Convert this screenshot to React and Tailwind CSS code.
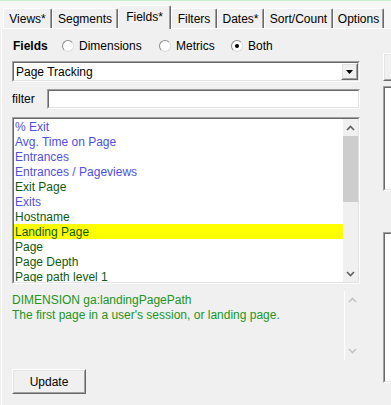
import React from 'react';

const font = { fontFamily: '"Liberation Sans", Arial, sans-serif' };

const tabs = [
  { label: 'Views*', w: 'w-[49px]' },
  { label: 'Segments', w: 'w-[66px]' },
  { label: 'Fields*', w: 'w-[53px]', active: true },
  { label: 'Filters', w: 'w-[46px]' },
  { label: 'Dates*', w: 'w-[47px]' },
  { label: 'Sort/Count', w: 'w-[69px]' },
  { label: 'Options', w: 'w-[51px]' },
];

const fields = [
  { name: '% Exit', kind: 'metric' },
  { name: 'Avg. Time on Page', kind: 'metric' },
  { name: 'Entrances', kind: 'metric' },
  { name: 'Entrances / Pageviews', kind: 'metric' },
  { name: 'Exit Page', kind: 'dim' },
  { name: 'Exits', kind: 'metric' },
  { name: 'Hostname', kind: 'dim' },
  { name: 'Landing Page', kind: 'dim', selected: true },
  { name: 'Page', kind: 'dim' },
  { name: 'Page Depth', kind: 'dim' },
  { name: 'Page path level 1', kind: 'dim' },
];

// classic sunken 3d border
function Sunken({ className = '', inner = '', children }) {
  return (
    <div className={`border border-t-[#a0a0a0] border-l-[#a0a0a0] border-r-white border-b-white ${className}`}>
      <div className={`h-full border border-t-[#696969] border-l-[#696969] border-r-[#e3e3e3] border-b-[#e3e3e3] ${inner}`}>
        {children}
      </div>
    </div>
  );
}

function Raised({ className = '', inner = '', children }) {
  return (
    <div className={`border border-t-white border-l-white border-r-[#696969] border-b-[#696969] ${className}`}>
      <div className={`h-full border border-t-[#e3e3e3] border-l-[#e3e3e3] border-r-[#a0a0a0] border-b-[#a0a0a0] ${inner}`}>
        {children}
      </div>
    </div>
  );
}

function Radio({ checked, label, w }) {
  return (
    <div className={`flex items-center ${w}`}>
      <div className="w-[12px] h-[12px] rounded-full bg-white border border-t-[#8a8a8a] border-l-[#8a8a8a] border-r-[#dcdcdc] border-b-[#dcdcdc] flex items-center justify-center">
        {checked && <div className="w-[4px] h-[4px] rounded-full bg-black" />}
      </div>
      <span className="ml-[5px]">{label}</span>
    </div>
  );
}

function Chevron({ up, color = '#606060' }) {
  return (
    <svg width="9" height="6" viewBox="0 0 9 6">
      <path d={up ? 'M1 5 L4.5 1.5 L8 5' : 'M1 1 L4.5 4.5 L8 1'} fill="none" stroke={color} strokeWidth="1.6" />
    </svg>
  );
}

export default function App() {
  return (
    <div className="w-[391px] h-[405px] overflow-hidden bg-[#f0f0f0] text-[12px] text-black leading-none" style={font}>
      <div className="h-px bg-[#c6f2c6]" />

      {/* tab strip */}
      <div className="flex items-end h-[27px] pl-[3px] bg-[#f6f6f6]">
        {tabs.map((t) => (
          <div
            key={t.label}
            className={`${t.w} flex items-center justify-center border-l border-t border-white border-r border-r-[#696969] shadow-[inset_-1px_0_0_#a0a0a0] rounded-t-[2px] ${t.active ? 'h-[24px] -mb-px relative z-10 bg-[#f0f0f0] pb-[2px]' : 'h-[20px] bg-[#f0f0f0]'}`}
          >
            {t.label}
          </div>
        ))}
      </div>

      {/* panel */}
      <div className="ml-px border-l border-t border-white h-[378px] flex">
        <div className="pl-[10px] w-[358px] flex flex-col">
          {/* fields radios */}
          <div className="mt-[9px] h-[15px] flex items-center">
            <span className="font-bold w-[50px] pl-px">Fields</span>
            <Radio label="Dimensions" w="w-[97px]" />
            <Radio label="Metrics" w="w-[72px]" />
            <Radio label="Both" checked />
          </div>

          {/* category select */}
          <Sunken className="mt-[8px] h-[21px] w-[348px]" inner="bg-white flex items-center">
            <span className="pl-[2px] flex-1">Page Tracking</span>
            <Raised className="w-[17px] h-[17px]" inner="bg-[#f0f0f0] flex items-center justify-center">
              <svg width="7" height="4" viewBox="0 0 7 4"><path d="M0 0 H7 L3.5 4 Z" fill="#000" /></svg>
            </Raised>
          </Sunken>

          {/* filter */}
          <div className="mt-[7px] h-[20px] flex items-center">
            <span className="w-[35px]">filter</span>
            <Sunken className="h-[20px] w-[313px]" inner="bg-white" />
          </div>

          {/* field list */}
          <Sunken className="mt-[8px] h-[167px] w-[348px]" inner="bg-white flex overflow-hidden">
            <div className="flex-1 flex flex-col">
              {fields.map((f) => (
                <div
                  key={f.name}
                  className={`h-[15px] shrink-0 flex items-center pl-px ${f.selected ? 'bg-[#ffff00]' : ''} ${f.kind === 'metric' ? 'text-[#4f4fe6]' : 'text-[#0f5a0f]'}`}
                >
                  {f.name}
                </div>
              ))}
            </div>
            <div className="w-[15px] bg-[#f0f0f0] flex flex-col">
              <div className="h-[17px] flex items-center justify-center"><Chevron up /></div>
              <div className="h-[66px] bg-[#cdcdcd]" />
              <div className="flex-1" />
              <div className="h-[17px] flex items-center justify-center"><Chevron /></div>
            </div>
          </Sunken>

          {/* description */}
          <div className="mt-[7px] h-[69px] flex text-[#21951f]">
            <div className="flex-1 pt-[2px] leading-[15px]">
              <div>DIMENSION ga:landingPagePath</div>
              <div>The first page in a user's session, or landing page.</div>
            </div>
            <div className="w-[15px] border-l border-white flex flex-col justify-between py-[6px] mr-px">
              <div className="flex justify-center"><Chevron up color="#c4c4c4" /></div>
              <div className="flex justify-center"><Chevron color="#c4c4c4" /></div>
            </div>
          </div>

          <Raised className="mt-[9px] w-[74px] h-[25px]" inner="bg-[#f0f0f0] flex items-center justify-center">
            Update
          </Raised>
        </div>

        {/* clipped right-hand column */}
        <div className="ml-[23px] flex-1 flex flex-col">
          <Raised className="mt-[24px] h-[28px] border-r-0" inner="bg-[#f0f0f0] border-r-0" />
          <Sunken className="mt-[5px] h-[105px] border-r-0" inner="bg-white border-r-0" />
          <Sunken className="mt-[41px] h-[151px] border-r-0" inner="bg-white border-r-0" />
        </div>
      </div>
    </div>
  );
}
